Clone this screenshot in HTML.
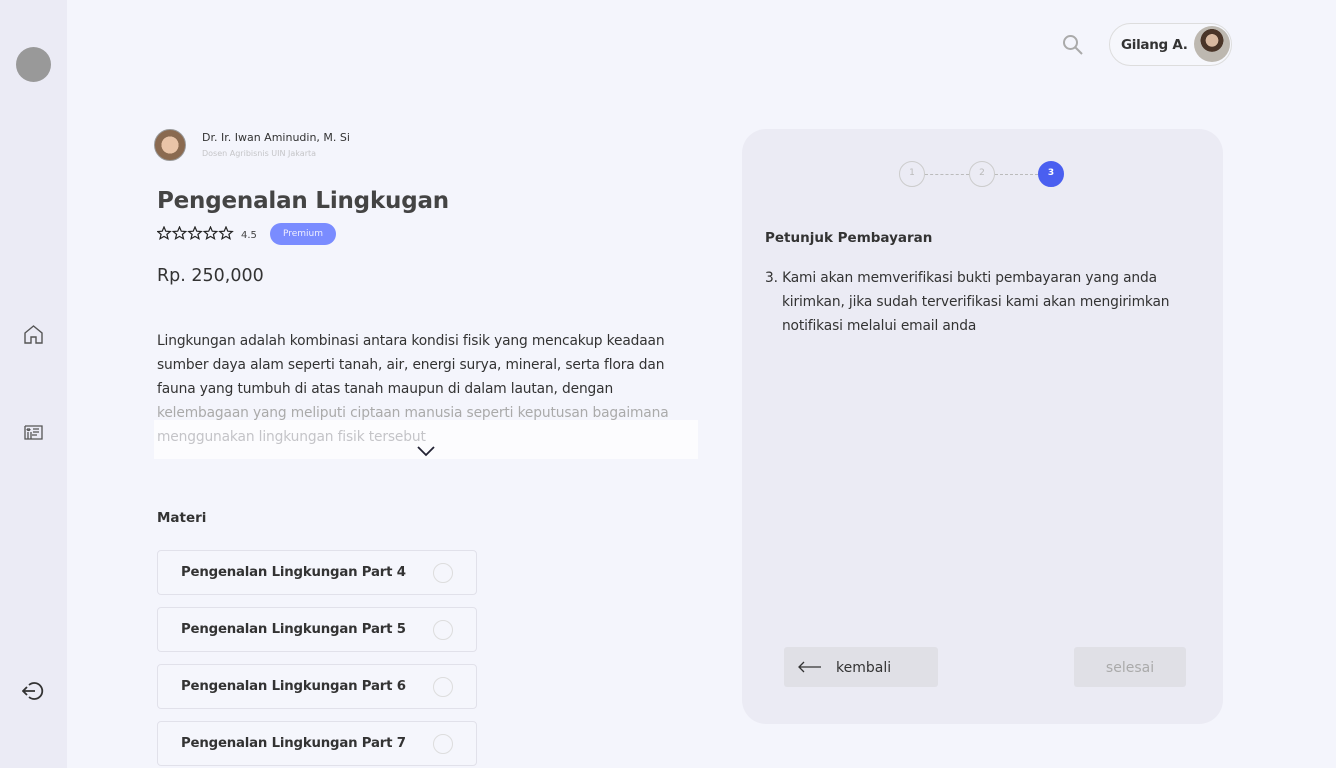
<!DOCTYPE html>
<html><head><meta charset="utf-8"><style>
*{margin:0;padding:0;box-sizing:border-box}
body{width:1336px;height:768px;overflow:hidden;background:#f4f5fc;font-family:"DejaVu Sans","Liberation Sans",sans-serif;color:#333;position:relative}
.abs{position:absolute}
.side{left:0;top:0;width:67px;height:768px;background:#ebebf5}
.nw{white-space:nowrap}
.mat{left:157px;width:320px;height:45px;border:1px solid #e1e1ea;border-radius:4px;background:#f5f6fc}
.mat span{position:absolute;left:23px;top:14px;font-size:13.3px;font-weight:bold;color:#333;letter-spacing:-0.2px}
.mat i{position:absolute;left:275px;top:12px;width:20px;height:20px;border:1px solid #ddd;border-radius:50%}
.step{width:26px;height:26px;border-radius:50%;border:1.5px solid #ccc;color:#bbb;font-size:9px;text-align:center;line-height:23px;top:161px}
</style></head><body>
<div class="abs side"></div>
<div class="abs" style="left:16px;top:47px;width:35px;height:35px;border-radius:50%;background:#999"></div>
<svg class="abs" style="left:23px;top:324px" width="21" height="21" viewBox="0 0 21 21" fill="none" stroke="#555" stroke-width="1.4"><path d="M2 9L10.5 2 19 9V19H13V13H8V19H2Z"/></svg>
<svg class="abs" style="left:24px;top:425px" width="20" height="16" viewBox="0 0 20 16" fill="none" stroke="#555" stroke-width="1.3"><path d="M1 1H18V14H1V1M3 4H6M3 4a1.5 1.5 0 1 0 3 0M4 7V14M7 7V14M9 4H15M9 7H15M8 10H13"/></svg>
<svg class="abs" style="left:22px;top:680px" width="24" height="22" viewBox="0 0 24 22" fill="none" stroke="#333" stroke-width="1.8"><path d="M7 5A8 8 0 1 1 7 17M1 11H13M5 7L1 11 5 15"/></svg>

<svg class="abs" style="left:1062px;top:34px" width="22" height="22" viewBox="0 0 22 22" fill="none" stroke="#aaa" stroke-width="2"><circle cx="8.5" cy="8.5" r="6.5"/><path d="M13.5 13.5L20 20"/></svg>
<div class="abs" style="left:1109px;top:23px;width:123px;height:43px;border:1px solid #ddd;border-radius:22px;background:#f6f7fc"></div>
<div class="abs nw" style="left:1121px;top:37px;font-size:13.5px;font-weight:bold;color:#333;letter-spacing:-0.3px">Gilang A.</div>
<div class="abs" style="left:1194px;top:26px;width:36px;height:36px;border-radius:50%;background:radial-gradient(circle at 50% 40%,#d9b9a0 0 22%,#4a3528 23% 40%,#bdb8b0 41%)"></div>

<div class="abs" style="left:154px;top:129px;width:32px;height:32px;border-radius:50%;border:1px solid #999;background:radial-gradient(circle at 50% 50%,#e9c4a8 0 40%,#8a6a50 41%)"></div>
<div class="abs nw" style="left:202px;top:131px;font-size:11px;color:#333">Dr. Ir. Iwan Aminudin, M. Si</div>
<div class="abs nw" style="left:202px;top:149px;font-size:8px;color:#c5c5c8">Dosen Agribisnis UIN Jakarta</div>
<div class="abs nw" style="left:157px;top:188px;font-size:23px;font-weight:bold;color:#444;letter-spacing:-0.2px">Pengenalan Lingkugan</div>
<svg class="abs" style="left:157px;top:226px" width="80" height="15" viewBox="0 0 80 15" fill="none" stroke="#222" stroke-width="1.2">
<g id="s"><path d="M7 1L8.8 5.2 13.3 5.5 9.9 8.4 11 12.8 7 10.4 3 12.8 4.1 8.4 0.7 5.5 5.2 5.2Z"/></g>
<use href="#s" x="15.5"/><use href="#s" x="31"/><use href="#s" x="46.5"/><use href="#s" x="62"/></svg>
<div class="abs nw" style="left:241px;top:230px;font-size:10px;color:#444">4.5</div>
<div class="abs" style="left:270px;top:223px;width:66px;height:22px;border-radius:11px;background:#7a8cff;color:#eef;font-size:9px;text-align:center;line-height:22px">Premium</div>
<div class="abs nw" style="left:157px;top:266px;font-size:17.5px;color:#333">Rp. 250,000</div>

<div class="abs" style="left:154px;top:420px;width:544px;height:39px;background:#fcfcfe"></div>
<div class="abs nw" style="left:157px;top:329px;font-size:13.8px;line-height:24px;color:#333;letter-spacing:-0.15px">Lingkungan adalah kombinasi antara kondisi fisik yang mencakup keadaan<br>sumber daya alam seperti tanah, air, energi surya, mineral, serta flora dan<br>fauna yang tumbuh di atas tanah maupun di dalam lautan, dengan<br><span style="color:#aaa">kelembagaan yang meliputi ciptaan manusia  seperti keputusan  bagaimana</span><br><span style="color:#c4c4c8">menggunakan lingkungan fisik tersebut</span></div>
<svg class="abs" style="left:416px;top:445px" width="20" height="12" viewBox="0 0 20 12" fill="none" stroke="#223" stroke-width="1.8"><path d="M2 2L10 10 18 2"/></svg>

<div class="abs nw" style="left:157px;top:510px;font-size:13.5px;font-weight:bold;color:#333">Materi</div>
<div class="abs mat" style="top:550px"><span>Pengenalan Lingkungan Part 4</span><i></i></div>
<div class="abs mat" style="top:607px"><span>Pengenalan Lingkungan Part 5</span><i></i></div>
<div class="abs mat" style="top:664px"><span>Pengenalan Lingkungan Part 6</span><i></i></div>
<div class="abs mat" style="top:721px"><span>Pengenalan Lingkungan Part 7</span><i></i></div>

<div class="abs" style="left:742px;top:129px;width:481px;height:595px;border-radius:24px;background:#ebebf4"></div>
<div class="abs step" style="left:899px">1</div>
<div class="abs step" style="left:969px">2</div>
<div class="abs step" style="left:1038px;background:#4a5ff0;border-color:#4a5ff0;color:#fff;font-weight:bold">3</div>
<div class="abs" style="left:925px;top:174px;width:44px;border-top:1px dashed #bbb"></div>
<div class="abs" style="left:995px;top:174px;width:43px;border-top:1px dashed #bbb"></div>
<div class="abs nw" style="left:765px;top:230px;font-size:13.5px;font-weight:bold;color:#333">Petunjuk Pembayaran</div>
<div class="abs nw" style="left:765px;top:266px;font-size:13.8px;line-height:24px;color:#333;letter-spacing:-0.15px">3. Kami akan memverifikasi bukti pembayaran yang anda<br>&nbsp;&nbsp;&nbsp;&nbsp;kirimkan, jika sudah terverifikasi kami akan mengirimkan<br>&nbsp;&nbsp;&nbsp;&nbsp;notifikasi melalui email anda</div>
<div class="abs" style="left:784px;top:647px;width:154px;height:40px;border-radius:3px;background:#e0e0e6"></div>
<svg class="abs" style="left:798px;top:661px" width="24" height="12" viewBox="0 0 24 12" fill="none" stroke="#333" stroke-width="1.3"><path d="M23 6H1M6 1L1 6 6 11"/></svg>
<div class="abs nw" style="left:836px;top:660px;font-size:14px;color:#333">kembali</div>
<div class="abs" style="left:1074px;top:647px;width:112px;height:40px;border-radius:3px;background:#e0e0e6;color:#aaa;font-size:14px;text-align:center;line-height:42px">selesai</div>
</body></html>
